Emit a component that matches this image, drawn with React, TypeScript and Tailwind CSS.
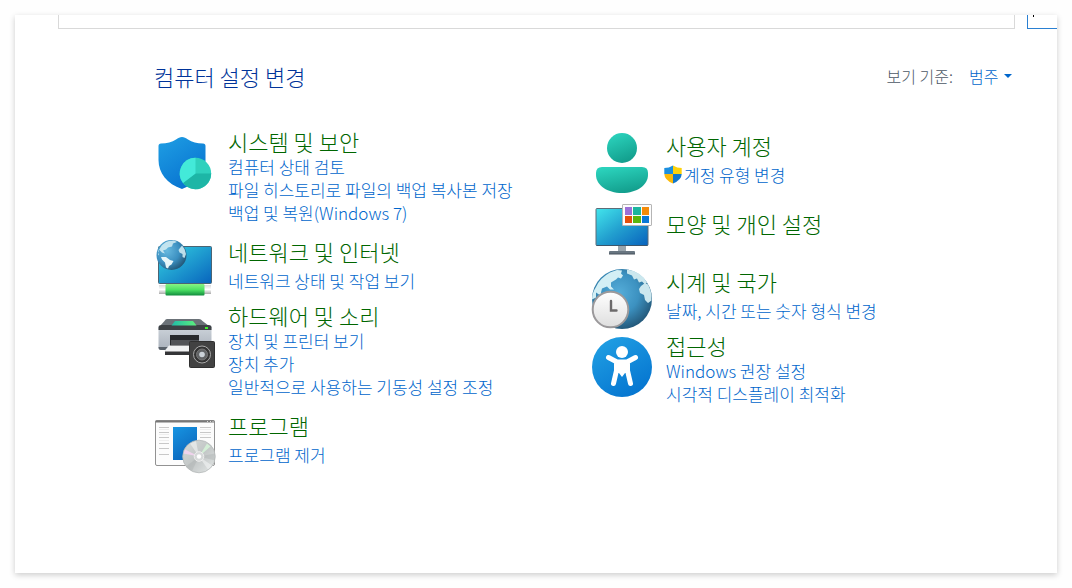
import type { ReactNode } from "react";

type Task = { label: string; shield?: boolean };
type Category = { title: string; icon: ReactNode; tasks: Task[]; height: string };

const iconClass = "h-[60px] w-[62px] shrink-0 overflow-visible";

function SecurityIcon() {
  return (
    <svg className={iconClass} viewBox="0 0 62 60" aria-hidden="true">
      <defs>
        <linearGradient id="sec-a" x1="0" y1="0" x2="0.6" y2="1">
          <stop offset="0" stopColor="#1f9fe4" />
          <stop offset="1" stopColor="#0873d0" />
        </linearGradient>
      </defs>
      <path d="M28 10c2 0 4 1 6 2.500 4 2.800 9 4 15 4q2.500 0 2.500 2.500v14c0 13-9 24-23.500 29C13 57 4.500 46 4.500 33V19q0-2.500 2.500-2.500c6 0 11-1.200 15-4 2-1.500 4-2.500 6-2.500z" fill="url(#sec-a)" />
      <circle cx="41.500" cy="46.500" r="15.700" fill="#2fd1bd" />
      <path d="M41.500 46.500H57.200A15.700 15.700 0 0 1 29 56z" fill="#1db6a6" />
      <path d="M41.500 46.500V30.800A15.700 15.700 0 0 0 29 56z" fill="#43ead9" />
    </svg>
  );
}

function NetworkIcon() {
  return (
    <svg className={iconClass} viewBox="0 0 62 60" aria-hidden="true">
      <defs>
        <linearGradient id="net-a" x1="0" y1="0" x2="1" y2="1">
          <stop offset="0" stopColor="#35d3e2" />
          <stop offset="1" stopColor="#0864bd" />
        </linearGradient>
        <radialGradient id="net-b" cx="0.35" cy="0.35" r="0.7">
          <stop offset="0" stopColor="#67b9df" />
          <stop offset="0.6" stopColor="#3b8fc0" />
          <stop offset="1" stopColor="#235878" />
        </radialGradient>
        <linearGradient id="net-c" x1="0" y1="0" x2="0" y2="1">
          <stop offset="0" stopColor="#88f383" />
          <stop offset="0.5" stopColor="#4ce264" />
          <stop offset="1" stopColor="#118b3d" />
        </linearGradient>
        <linearGradient id="net-d" x1="0" y1="0" x2="0" y2="1">
          <stop offset="0" stopColor="#d8d8d8" />
          <stop offset="0.5" stopColor="#fff" />
          <stop offset="1" stopColor="#aaa" />
        </linearGradient>
      </defs>
      <rect x="4.500" y="9.500" width="53" height="37" rx="1" fill="url(#net-a)" stroke="#4b6473" />
      <rect x="5" y="48" width="52" height="9" fill="url(#net-d)" />
      <rect x="11.500" y="47" width="39" height="11.500" rx="1" fill="url(#net-c)" />
      <circle cx="17.500" cy="18" r="15" fill="url(#net-b)" />
      <path d="M8 8l4-3 3-1 5-.5 3 1.500-4 1.500-1 3-4 1-2 2-3 1 2 3-3-1-3-3-1 2 1 3-1 1q0-5 4-10.500z" fill="#d6eff5" opacity=".85" />
      <path d="M7 20h5l4 3 3.500 1-2 3.500-2.500 1.500-1 2.500-2-1-1-5-3-3z" fill="#f0fbfc" opacity=".95" />
      <path d="M26 11l2-2.500 2.500 3.500 1.500 5-1.500 4-2-1v-3l-3-1.500-1-2.500z" fill="#cceaf2" opacity=".9" />
    </svg>
  );
}

function HardwareIcon() {
  return (
    <svg className={iconClass} viewBox="0 0 62 60" aria-hidden="true">
      <defs>
        <linearGradient id="hw-a" x1="0" y1="0" x2="0" y2="1">
          <stop offset="0" stopColor="#cfd5dc" />
          <stop offset="1" stopColor="#a9b1bb" />
        </linearGradient>
        <linearGradient id="hw-b" x1="0" y1="0" x2="1" y2="0">
          <stop offset="0" stopColor="#20bca8" />
          <stop offset="1" stopColor="#5df07d" />
        </linearGradient>
      </defs>
      <path d="M13 18h32q2 0 3.500 2L55 25H6l4.500-5q1-2 2.500-2z" fill="#6b7278" />
      <rect x="4.500" y="24" width="53" height="25" rx="2" fill="url(#hw-a)" />
      <path d="M4.500 29v-2.500q0-2.500 3-2.500h47q3 0 3 2.500V29z" fill="#3d4145" />
      <path d="M21 20h18l3.500 4.500h-25z" fill="url(#hw-b)" />
      <rect x="51" y="26" width="3" height="2" fill="#42ee2c" />
      <path d="M4.500 46h10v3H7q-2.500 0-2.500-3z" fill="#59616a" />
      <rect x="16" y="34" width="29" height="13" fill="#282a2d" />
      <path d="M17 39h28v5H17z" fill="#515357" />
      <path d="M11 49h26v5H11z" fill="#343537" />
      <path d="M15 44.500h26l-3 6H10z" fill="#f1f2f3" />
      <rect x="35.500" y="40.500" width="25" height="26" rx="1" fill="#424242" stroke="#303030" />
      <circle cx="48" cy="53.500" r="8.500" fill="#343434" stroke="#a9a9a9" />
      <circle cx="48" cy="53.500" r="5.500" fill="#616365" stroke="#777" />
      <circle cx="48" cy="53.500" r="2.800" fill="#cbd2d8" />
    </svg>
  );
}

function ProgramsIcon() {
  return (
    <svg className={iconClass} viewBox="0 0 62 60" aria-hidden="true">
      <defs>
        <linearGradient id="pr-a" x1="0" y1="0" x2="0.5" y2="1">
          <stop offset="0" stopColor="#1795e2" />
          <stop offset="1" stopColor="#0c67bd" />
        </linearGradient>
        <linearGradient id="pr-b" x1="0" y1="0" x2="1" y2="1">
          <stop offset="0" stopColor="#d8dcda" />
          <stop offset="0.5" stopColor="#c2c6c6" />
          <stop offset="1" stopColor="#e5e9e8" />
        </linearGradient>
      </defs>
      <rect x="1.500" y="9.500" width="59" height="45" rx="1.500" fill="#fcfcfc" stroke="#929292" />
      <path d="M1.500 9.500h59v2h-59z" fill="#777" />
      <path d="M53 10.500h1m2 0h1m1.500 0h1" stroke="#ddd" />
      <path d="M5 16.500h10M5 21.500h10M5 26.500h10M5 32.500h10M5 37.500h10M5 43.500h10M46 16.500h11M46 21.500h11M46 26.500h11" stroke="#c8c8c8" />
      <path d="M5 18.500h10M5 23.500h10M5 29.500h10M46 18.500h11M46 23.500h11" stroke="#eee" />
      <rect x="19" y="16" width="24" height="33" fill="url(#pr-a)" />
      <circle cx="45" cy="45.500" r="16.300" fill="url(#pr-b)" stroke="#b5b9b9" strokeWidth=".8" />
      <path d="M45 45.500L29.500 42.500l1.500-4z" fill="#efd3ec" />
      <path d="M45 45.500L53 32.500l3.500 3z" fill="#d3eed6" />
      <path d="M45 45.500L36 32.500 42 30zM45 45.500l13 9-4 4z" fill="#f2f4f4" opacity=".6" />
      <path d="M45 45.500l16-3v7zM45 45.500l-13 10 6 4.500z" fill="#a9afaf" opacity=".4" />
      <circle cx="45" cy="45.500" r="4.800" fill="#d6d9d9" stroke="#eee" />
      <circle cx="45" cy="45.500" r="2.200" fill="#fff" />
    </svg>
  );
}

function AccountsIcon() {
  return (
    <svg className={iconClass} viewBox="0 0 62 60" aria-hidden="true">
      <defs>
        <linearGradient id="ac-a" x1="0.3" y1="0" x2="0.7" y2="1">
          <stop offset="0" stopColor="#2bd2bc" />
          <stop offset="1" stopColor="#119b8a" />
        </linearGradient>
      </defs>
      <circle cx="30" cy="17" r="15" fill="url(#ac-a)" />
      <path d="M10 36h40q6 0 6 6v2c0 10-11 18-26 18S4 54 4 44v-2q0-6 6-6z" fill="url(#ac-a)" />
    </svg>
  );
}

function AppearanceIcon() {
  return (
    <svg className="h-[54px] w-[62px] shrink-0 overflow-visible" viewBox="0 0 62 54" aria-hidden="true">
      <defs>
        <linearGradient id="ap-a" x1="0" y1="0" x2="1" y2="1">
          <stop offset="0" stopColor="#42e5ec" />
          <stop offset="0.500" stopColor="#229fcf" />
          <stop offset="1" stopColor="#0862bd" />
        </linearGradient>
      </defs>
      <path d="M26 36h8v7h-8z" fill="#9aa5ad" />
      <path d="M18 42h24q1 0 1 1v2H17v-2q0-1 1-1z" fill="#697681" />
      <path d="M17 45h26" stroke="#46515a" />
      <rect x="4" y="-.5" width="52" height="37" rx="1" fill="url(#ap-a)" stroke="#5d6d78" />
      <path d="M4.500 36.500h51" stroke="#3c566b" />
      <rect x="30.500" y="-4.500" width="29" height="21" rx=".5" fill="#fcfcfc" stroke="#b5b5b5" />
      <path d="M33-2h7v8h-7z" fill="#9c70d8" />
      <path d="M41-2h8v8h-8z" fill="#1bb59f" />
      <path d="M50-2h7v8h-7z" fill="#f48b09" />
      <path d="M33 7h7v7h-7z" fill="#e5500c" />
      <path d="M41 7h8v7h-8z" fill="#5bb60c" />
      <path d="M50 7h7v7h-7z" fill="#0878d7" />
    </svg>
  );
}

function ClockIcon() {
  return (
    <svg className={iconClass} viewBox="0 0 62 60" aria-hidden="true">
      <defs>
        <radialGradient id="cl-a" cx="0.45" cy="0.4" r="0.6">
          <stop offset="0" stopColor="#55add9" />
          <stop offset="0.55" stopColor="#3c91c0" />
          <stop offset="1" stopColor="#245a7c" />
        </radialGradient>
        <linearGradient id="cl-b" x1="0" y1="0" x2="0" y2="1">
          <stop offset="0" stopColor="#fff" />
          <stop offset="1" stopColor="#dedede" />
        </linearGradient>
      </defs>
      <circle cx="30" cy="32" r="30" fill="url(#cl-a)" />
      <path d="M4 20Q8 11 18 5.500l7-2.500 5 .5-1 3 2 2-2 3-3-1-2 2-5 3 0 4 3 3-4 0-3-3-5 2-1 4 1 3-3-1-3-2 0 5-4 2Q0 26 4 20z" fill="#d3eff5" />
      <path d="M35 2.500q14 2 20 13l-2 2-3-3-3 1-2-4-3 1-2-4-5-2zM49 19l4-3 3 1.500q4 7 3.500 16L56 36l-3-3-1-5-4-2-1-4z" fill="#cbe7ee" />
      <circle cx="18.500" cy="42.500" r="17.800" fill="url(#cl-b)" stroke="#9b999b" strokeWidth="2" />
      <path d="M19 34v9.500h5.500" fill="none" stroke="#6c6a6b" strokeWidth="2.400" strokeLinecap="round" />
    </svg>
  );
}

function AccessIcon() {
  return (
    <svg className={iconClass} viewBox="0 0 62 60" aria-hidden="true">
      <defs>
        <linearGradient id="ax-a" x1="0.2" y1="0" x2="0.8" y2="1">
          <stop offset="0" stopColor="#209fe3" />
          <stop offset="1" stopColor="#0473cf" />
        </linearGradient>
      </defs>
      <circle cx="30" cy="36" r="30" fill="url(#ax-a)" />
      <circle cx="30" cy="21" r="6" fill="#fff" />
      <path d="M16.500 26.500L25 31h10l8.500-4.500M24.500 32v7.500L21.500 52.500M35.500 32v7.500l3 13" fill="none" stroke="#fff" strokeWidth="5" strokeLinecap="round" strokeLinejoin="round" />
      <path d="M24 31h12v11h-3l-3 4-3-4h-3z" fill="#fff" />
    </svg>
  );
}

function UacShield() {
  return (
    <svg className="h-[19px] w-[18px] shrink-0" viewBox="0 0 18 19" aria-hidden="true">
      <path d="M9 .5Q5 3 .3 3v6H9z" fill="#1c8fdf" />
      <path d="M9 .5Q13 3 17.700 3v6H9z" fill="#fdd20b" />
      <path d="M.3 9H9v9.500Q.5 15 .3 9z" fill="#fbb90a" />
      <path d="M17.700 9H9v9.500Q17.500 15 17.700 9z" fill="#1377cc" />
    </svg>
  );
}

const left: Category[] = [
  {
    title: "시스템 및 보안",
    icon: <SecurityIcon />,
    height: "min-h-[106px]",
    tasks: [
      { label: "컴퓨터 상태 검토" },
      { label: "파일 히스토리로 파일의 백업 복사본 저장" },
      { label: "백업 및 복원(Windows 7)" },
    ],
  },
  { title: "네트워크 및 인터넷", icon: <NetworkIcon />, height: "min-h-[60px]", tasks: [{ label: "네트워크 상태 및 작업 보기" }] },
  {
    title: "하드웨어 및 소리",
    icon: <HardwareIcon />,
    height: "min-h-[106px]",
    tasks: [{ label: "장치 및 프린터 보기" }, { label: "장치 추가" }, { label: "일반적으로 사용하는 기동성 설정 조정" }],
  },
  { title: "프로그램", icon: <ProgramsIcon />, height: "min-h-[60px]", tasks: [{ label: "프로그램 제거" }] },
];

const right: Category[] = [
  { title: "사용자 계정", icon: <AccountsIcon />, height: "min-h-[74px]", tasks: [{ label: "계정 유형 변경", shield: true }] },
  { title: "모양 및 개인 설정", icon: <AppearanceIcon />, height: "min-h-[54px]", tasks: [] },
  { title: "시계 및 국가", icon: <ClockIcon />, height: "min-h-[60px]", tasks: [{ label: "날짜, 시간 또는 숫자 형식 변경" }] },
  {
    title: "접근성",
    icon: <AccessIcon />,
    height: "min-h-[60px]",
    tasks: [{ label: "Windows 권장 설정" }, { label: "시각적 디스플레이 최적화" }],
  },
];

function CategoryRow({ item }: { item: Category }) {
  return (
    <li className={`flex items-start gap-3 ${item.height}`}>
      {item.icon}
      <div className={`flex flex-col pt-px ${item.tasks.length === 1 ? "gap-1" : ""}`}>
        <h2 className="text-[22px] leading-[27px] font-light whitespace-nowrap text-[#006600]">
          <a href="#" className="block hover:underline">{item.title}</a>
        </h2>
        {item.tasks.length > 0 && (
          <ul>
            {item.tasks.map((task) => (
              <li key={task.label} className="text-[17px] leading-[23px] whitespace-nowrap text-[#0066cc]">
                <a href="#" className={`flex items-center gap-0.5 hover:underline ${task.shield ? "-ml-0.5" : ""}`}>
                  {task.shield && <UacShield />}
                  {task.label}
                </a>
              </li>
            ))}
          </ul>
        )}
      </div>
    </li>
  );
}

export default function App() {
  return (
    <div className="flex min-h-screen bg-[#fefefe] p-[15px] font-['Noto_Sans_CJK_KR',sans-serif] font-light">
      <main className="min-w-0 flex-1 overflow-hidden bg-white shadow-[0_2px_6px_rgba(0,0,0,0.2)]">
        <div className="flex h-3.5 gap-3 pl-[43px]">
          <input aria-label="주소" className="min-w-0 flex-1 border-x border-b border-[#d9d9d9] outline-none" />
          <div className="flex w-[30px] shrink-0 border-b border-l border-[#2a80d2] pl-[5px]">
            <span className="h-0.5 w-px bg-black" />
          </div>
        </div>

        <header className="flex items-center justify-between pt-8 pr-11 pl-[139px]">
          <h1 className="text-[22px] leading-[30px] font-light text-[#003399]">컴퓨터 설정 변경</h1>
          <div className="flex items-center text-base leading-6">
            <label htmlFor="view-by" className="mr-4 text-[#4c5866]">보기 기준:</label>
            <select id="view-by" className="appearance-none bg-transparent text-[#0066cc] outline-none">
              <option>범주</option>
            </select>
            <svg className="ml-1 h-2 w-2.5" viewBox="0 0 10 8" aria-hidden="true">
              <path d="M1 2h8L5 6z" fill="#0066cc" />
            </svg>
          </div>
        </header>

        <div className="grid grid-cols-2 pt-9 pr-[27px] pb-20 pl-[139px]">
          <ul className="flex flex-col gap-1">
            {left.map((item) => <CategoryRow key={item.title} item={item} />)}
          </ul>
          <ul className="flex flex-col gap-1 pt-1">
            {right.map((item) => <CategoryRow key={item.title} item={item} />)}
          </ul>
        </div>
      </main>
    </div>
  );
}
